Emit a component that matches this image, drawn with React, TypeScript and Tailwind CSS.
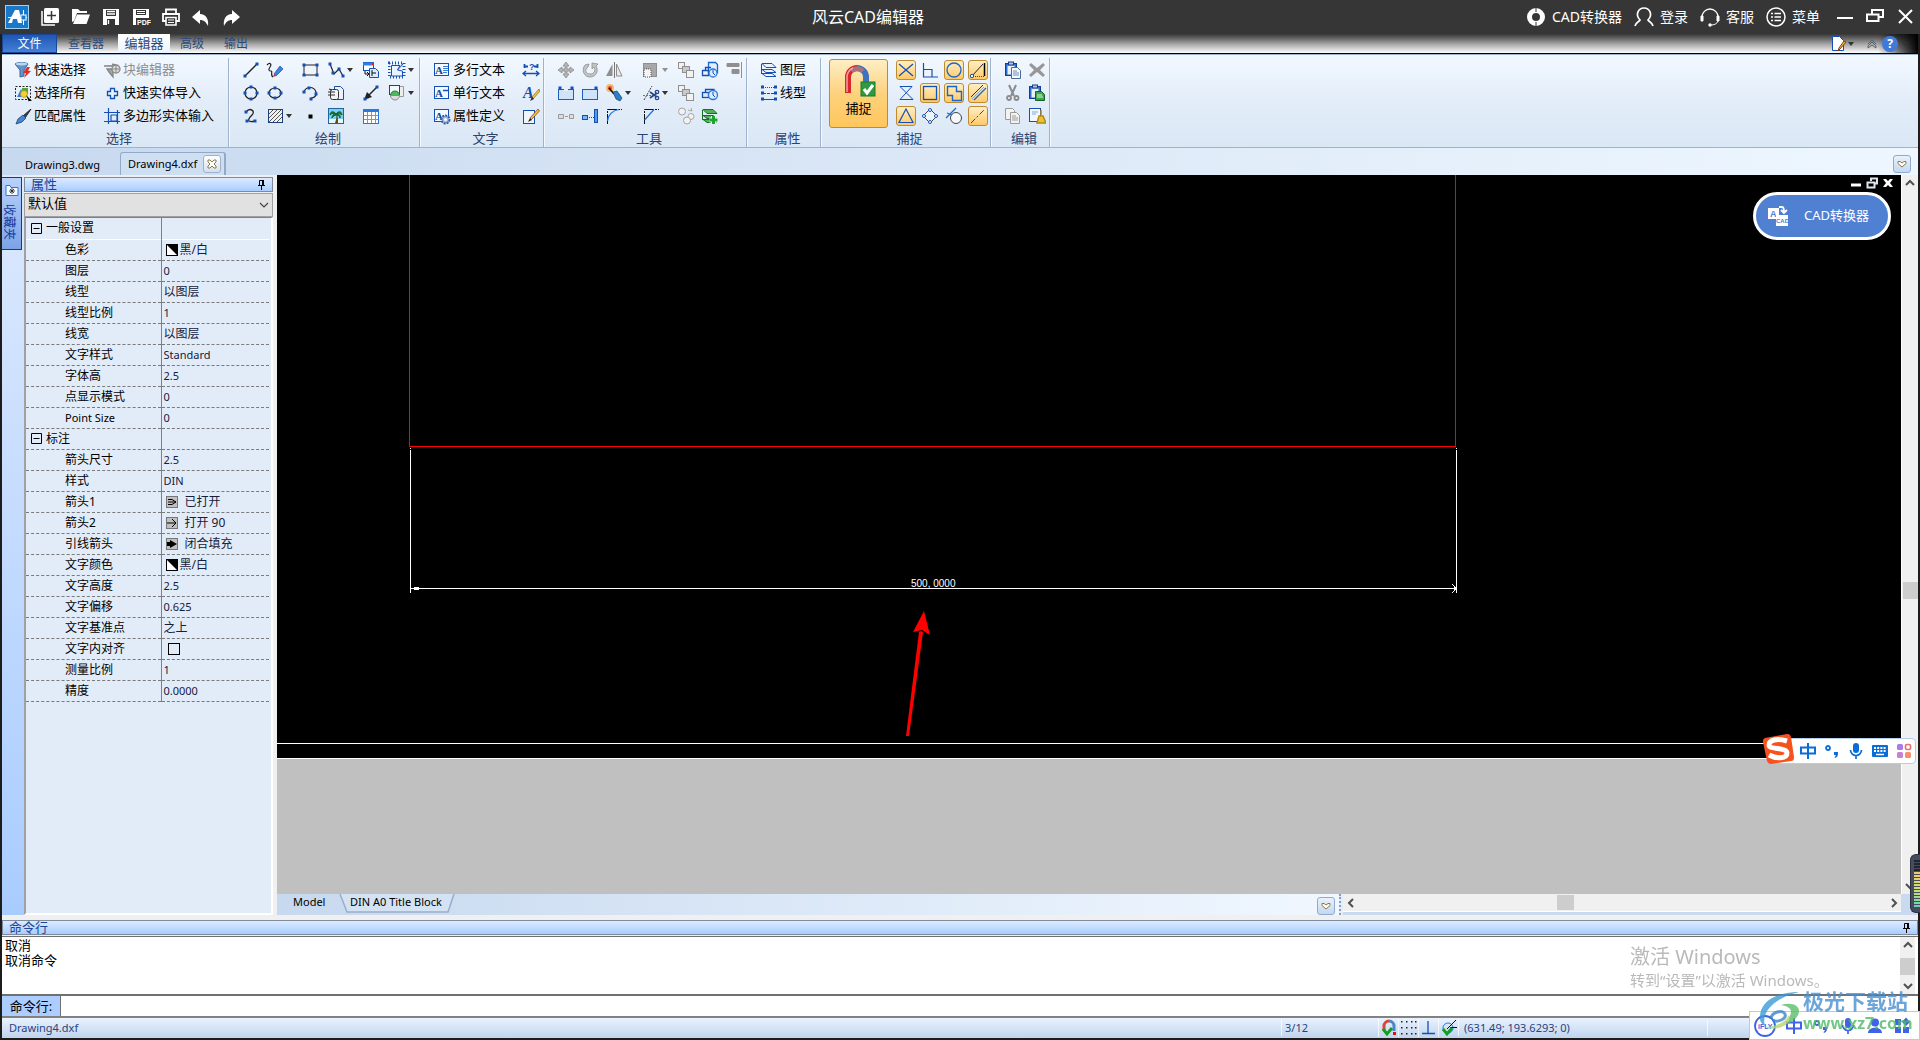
import { Fragment, type ReactNode } from "react";

const dot = (x: number, y: number) => (
  <rect key={`${x}-${y}`} x={x - 1.5} y={y - 1.5} width="3" height="3" fill="#1450b4" />
);
const dots = (pts: number[][]) => pts.map(([x, y]) => dot(x, y));

const letterPage = (extra: ReactNode) => (
  <>
    <rect x="1.5" y="2.5" width="14" height="12" fill="#f4f9ff" stroke="#1450b4" />
    <text x="2" y="13" fontSize="11" fontWeight="700" fontFamily="Liberation Serif, serif" fill="#12479e">A</text>
    {extra}
  </>
);

const layers = (fill: string, stroke: string) => (
  <>
    <path d="M2 12.5h10l4 3H6z" fill={fill} stroke={stroke} />
    <path d="M2 8.500h10l4 3H6z" fill={fill} stroke={stroke} />
    <path d="M2 2.500h10l4 4H6z" fill={fill} stroke={stroke} />
    <path d="M1.500 3v10" stroke={stroke} />
  </>
);

const squares = (
  <g fill="#f2f2f2" stroke="#8f8f8f">
    <rect x="1.5" y="1.500" width="6" height="6" />
    <rect x="5.500" y="5.500" width="7" height="6" fill="#c9c9c9" />
    <rect x="9.500" y="9.500" width="7" height="7" />
  </g>
);

const clipboard = (
  <>
    <rect x="1.500" y="2.500" width="11" height="12" fill="#2f6ed0" stroke="#123f8f" />
    <rect x="3.500" y="4.500" width="7" height="9" fill="#e9f1fb" />
    <rect x="4.500" y="1" width="5" height="3" fill="#b9c4d2" stroke="#123f8f" />
  </>
);

const icons: Record<string, ReactNode> = {
  quick: (
    <>
      <path d="M1 3c2-2 11-2 13 0L10 9v6l-4 1V9z" fill="#5d95c9" stroke="#3a6795" />
      <ellipse cx="7.500" cy="3" rx="6" ry="1.500" fill="#b9d9f2" />
      <path d="M13 6L9 12l3 .3L10 17l7-7-3-.3L16 6z" fill="#e22b2b" />
    </>
  ),
  all: (
    <>
      <rect x="1.500" y="2.500" width="15" height="13" fill="none" stroke="#222" strokeDasharray="2 1.500" />
      <rect x="8" y="4" width="6" height="6" fill="#4fa63d" />
      <path d="M3 13l4-8 4 8z" fill="#3b7fd4" />
      <circle cx="10" cy="10" r="3.500" fill="#f2cf32" stroke="#a98a12" strokeWidth=".6" />
      <path d="M12 11l6 6h-3v1z" fill="#000" />
    </>
  ),
  match: (
    <>
      <path d="M17 2l-8 7 2 2z" fill="#3c4654" stroke="#222" />
      <path d="M9 8L4 12l-2 5 6-2 4-4z" fill="#4a86d0" stroke="#1b3f7a" strokeWidth=".8" />
    </>
  ),
  blockEdit: (
    <>
      <path d="M1 5h8l1-2 3 1M4 8h6v8l-4-5z" fill="#a5a5a5" stroke="#858585" strokeWidth="1.300" />
      <circle cx="13" cy="8" r="4" fill="#ddd" stroke="#858585" strokeWidth="1.300" />
      <path d="M10 8h6M13 5v6" stroke="#858585" />
    </>
  ),
  plus: <path d="M7.500 4.500h4v3h3v4h-3v3h-4v-3h-3v-4h3z" fill="#e8f2ff" stroke="#1450b4" strokeWidth="1.300" />,
  polyIn: <path d="M5.500 1v16M1 5.500h16M14.500 3v14M1 14.500h16M8 8h6v6M8 8v6h6" fill="none" stroke="#1450b4" strokeWidth="1.200" />,

  line: <><path d="M3 15L15 3" stroke="#222" strokeWidth="1.300" />{dots([[3, 15], [15, 3]])}</>,
  sketch: (
    <>
      <path d="M1 4c3-3 5-1 3 2s-1 4 1 4-1 5 2 6" fill="none" stroke="#222" strokeWidth="1.200" />
      <path d="M8 13l6-8 3 3-7 7z" fill="#3b83e0" stroke="#1b4f9c" strokeWidth=".7" />
      <path d="M8 13l2 2-3 1z" fill="#e22b2b" />
    </>
  ),
  rect: <><rect x="3" y="4" width="13" height="10" fill="none" stroke="#222" />{dots([[3, 4], [16, 4], [3, 14], [16, 14]])}</>,
  poly: <><path d="M3 3l4 10 5-5 4 7" fill="none" stroke="#222" strokeWidth="1.200" />{dots([[3, 3], [6, 12], [12, 8], [16, 15]])}</>,
  blocks: (
    <>
      <rect x="1.500" y="1.500" width="10" height="8" fill="#fff" stroke="#1450b4" />
      <path d="M1 3h11" stroke="#2f80e8" strokeWidth="3" />
      <rect x="10" y="2" width="2" height="2" fill="#e22" />
      <path d="M7.500 7.500h6l3 3v6h-9z" fill="#dceafb" stroke="#1450b4" />
      <path d="M10 9v6M10 12h4M3 10v3h4m-2-2l2 2-2 2" fill="none" stroke="#111" />
    </>
  ),
  clip: (
    <>
      <rect x="1" y="2" width="15" height="14" fill="none" stroke="#1450b4" strokeWidth="3" strokeDasharray="1 2" />
      <path d="M3.500 4.500H12L9.500 9l5 1v5h-11z" fill="#e9f3ff" stroke="#1450b4" />
      <path d="M9.500 9L16 2" stroke="#1450b4" />
    </>
  ),
  circle: <><circle cx="9" cy="9" r="6" fill="none" stroke="#222" strokeWidth="1.200" />{dots([[9, 3], [3, 9], [15, 9], [9, 15]])}</>,
  ellipse: <><ellipse cx="9" cy="9" rx="6" ry="5" fill="none" stroke="#222" strokeWidth="1.200" />{dots([[9, 4], [3, 9], [15, 9], [9, 14]])}</>,
  arc: <><path d="M3 8c2-6 10-6 12 0 1 4-2 6-5 6" fill="none" stroke="#222" strokeWidth="1.200" />{dots([[3, 8], [8, 4], [15, 10], [10, 15]])}</>,
  pages: (
    <>
      <path d="M7.500 2.500h6l3 3v10h-9z" fill="#e9f3ff" stroke="#1b4f9c" />
      <rect x="3.500" y="5.500" width="8" height="10" rx="2" fill="#f3f3f3" stroke="#333" />
      <path d="M1 8h7M1 11h7M2 5l3 1" stroke="#333" strokeWidth="1.200" />
    </>
  ),
  arrow: <><path d="M15 3L7 11" stroke="#222" strokeWidth="1.500" /><path d="M2 16l3-8 5 5z" fill="#222" />{dots([[15, 3], [3, 15]])}</>,
  wipe: (
    <>
      <path d="M12 2.500h3.500v10H12" fill="#eee" stroke="#999" />
      <rect x="1.500" y="1.500" width="10" height="9" fill="#f2f8ff" stroke="#1b3f9c" />
      <path d="M2.500 11.500a4.500 4.500 0 019 0z" fill="#4db85f" stroke="#2a7a3a" />
      <path d="M2.500 11.500a4.500 4.500 0 009 0z" fill="#dcdcdc" stroke="#8a8a8a" />
    </>
  ),
  spline: <><path d="M4 5c4-5 10-1 6 3s-6 8 3 6" fill="none" stroke="#222" strokeWidth="1.300" />{dots([[4, 5], [5, 14], [13, 14]])}</>,
  hatch: (
    <>
      <rect x="2.500" y="2.500" width="14" height="13" fill="#f0f0f0" stroke="#1b3f7a" />
      <path d="M3 7l4-4M3 11l8-8M3 15L15 3M7 15l9-9M11 15l5-5" stroke="#555" />
    </>
  ),
  point: <rect x="7.500" y="7.500" width="4" height="4" fill="#000" />,
  palm: (
    <>
      <rect x="1.500" y="1.500" width="15" height="15" fill="#7fd0ee" stroke="#1c66a8" />
      <rect x="2" y="12" width="14" height="4" fill="#e8f7fb" />
      <path d="M9 7c1 3 0 6-1 9h3c0-3 0-6-1-9z" fill="#5d4a1c" />
      <path d="M9 7C6 3 3 5 3 8c2-2 4-2 6-1-3 0-4 2-4 4 1-2 3-3 4-3 2 0 4 1 4 3 1-2-1-4-3-4 2-1 4 0 5 1 0-3-3-5-6-1z" fill="#1d7a3c" stroke="#12602c" />
    </>
  ),
  table: (
    <>
      <rect x="1.500" y="2.500" width="15" height="14" fill="#fff" stroke="#2a78dc" />
      <rect x="1" y="2" width="16" height="3" fill="#2a78dc" />
      <path d="M5.500 5v11M9.500 5v11M13.500 5v11M2 8.500h14M2 12.500h14" stroke="#5b9cec" />
    </>
  ),

  mtext: letterPage(<path d="M10 5.500h5M10 7.500h5M10 9.500h5M10 11.500h4" stroke="#3b7fd4" />),
  stext: letterPage(<path d="M10 6.500h5" stroke="#1450b4" strokeWidth="1.500" />),
  attr: letterPage(<><circle cx="12.500" cy="12.500" r="4" fill="#9db8dc" stroke="#345f9c" strokeDasharray="2 1" strokeWidth="2" /><circle cx="12.500" cy="12.500" r="1.500" fill="#fff" /></>),
  find: (
    <>
      <path d="M2 5.500h4M12 5.500h4M2.500 3v4M15.500 3v4" stroke="#1450b4" strokeWidth="1.800" />
      <text x="7" y="9" fontSize="9" fontWeight="700" fontFamily="Liberation Sans, sans-serif" fill="#1450b4">?</text>
      <path d="M1 12.500h16M4 10l-3 2.500L4 15M14 10l3 2.500-3 2.500" fill="none" stroke="#1450b4" strokeWidth="1.300" />
    </>
  ),
  styleA: (
    <>
      <text x="1" y="14" fontSize="16" fontWeight="700" fontStyle="italic" fontFamily="Liberation Serif, serif" fill="#1450b4">A</text>
      <path d="M17 5l-7 8 1.500 1.500L18 7z" fill="#f3c33a" stroke="#8a6512" strokeWidth=".7" />
      <path d="M10 13l-2 4 4-2z" fill="#222" />
    </>
  ),
  editText: (
    <>
      <rect x="1.500" y="3.500" width="11" height="13" fill="#eef5fe" stroke="#1450b4" />
      <path d="M16 2L8 11l1.500 1.500L17.500 4z" fill="#f3c33a" stroke="#8a3512" strokeWidth=".7" />
      <path d="M8 11l-2 4 4-2z" fill="#222" />
    </>
  ),

  move: <path d="M9 1l3 4h-2v3h3V6l4 3-4 3v-2h-3v3h2l-3 4-3-4h2v-3H5v2L1 9l4-3v2h3V5H6z" fill="#b5b5b5" stroke="#8c8c8c" strokeWidth=".8" />,
  rotate: <path d="M4 4C0 9 3 16 9 16s9-6 6-11l2-2-6-1v6l2-2c2 4 0 7-4 7S3 9 7 6L8 3z" fill="#c4c4c4" stroke="#8f8f8f" strokeWidth=".8" />,
  mirror: <><path d="M7.500 3v12H1z" fill="#8f8f8f" /><path d="M11.500 3v12H17z" fill="#e8e8e8" stroke="#8f8f8f" /><path d="M9.500 1v16" stroke="#777" /></>,
  scale: <><rect x="1.500" y="2.500" width="13" height="13" fill="#a8a8a8" stroke="#8f8f8f" /><rect x="2" y="8" width="7" height="8" fill="#f5f5f5" stroke="#555" strokeDasharray="1 1" /></>,
  squares,
  copyBlue: (
    <>
      <path d="M7.500 1.500h7l2 2v8h-9z" fill="#e3effc" stroke="#1b66cc" strokeWidth="1.300" />
      <path d="M1.500 9.500h6v5h-6zM4.500 9V6.500H10" fill="none" stroke="#1450b4" strokeWidth="1.300" />
      <circle cx="12" cy="12" r="4" fill="#dcebfc" stroke="#2a78dc" strokeWidth="1.300" />
      <path d="M12 12V9M12 12l2 2" stroke="#1450b4" />
    </>
  ),
  align: <path d="M2 2.500h12v3H2zM7 8.500h7v4H7zM16.500 1v16" fill="#8f8f8f" stroke="#8f8f8f" />,
  join: <><rect x="1.500" y="5.500" width="15" height="10" fill="#cfe3fa" stroke="#1b5fc0" /><path d="M7 4h4v3H7z" fill="#e7f0fb" />{dots([[3, 4], [15, 4]])}</>,
  stretch: <><rect x="1.500" y="5.500" width="15" height="10" fill="#cfe3fa" stroke="#1b5fc0" />{dots([[15, 4]])}</>,
  explode: (
    <>
      <circle cx="5" cy="4" r="4" fill="#f9b56a" /><circle cx="5" cy="4" r="2" fill="#ec4b1e" />
      <path d="M4 4l5 6" stroke="#111" strokeWidth="1.600" />
      <path d="M8 8l4-1 5 7-2 3-4-2z" fill="#2f7fc4" stroke="#123f6f" strokeWidth=".7" />
    </>
  ),
  trim: (
    <>
      <path d="M2 16L10 2" stroke="#444" strokeDasharray="2 1" />
      <path d="M1 11.500h10" stroke="#777" strokeDasharray="2 1" />
      <path d="M8 8l7 5M8 14l7-5" stroke="#27468c" strokeWidth="1.600" />
      <circle cx="15" cy="8" r="1.700" fill="none" stroke="#27468c" strokeWidth="1.300" /><circle cx="15" cy="14" r="1.700" fill="none" stroke="#27468c" strokeWidth="1.300" />
    </>
  ),
  group: (
    <>
      <path d="M4.500 9V5.500H13V7" fill="none" stroke="#1450b4" strokeWidth="1.300" />
      <rect x="1.500" y="8.500" width="6" height="5" fill="#dbeafb" stroke="#1450b4" strokeWidth="1.300" />
      <circle cx="12" cy="11" r="4.500" fill="#dceafb" stroke="#2a78dc" strokeWidth="1.300" />
      <path d="M12 11V8M12 11l2 2" stroke="#1450b4" />
    </>
  ),
  lengthen: <path d="M1.500 7.500h5v4h-5zM8 9.500h3M12.500 7.500h4v4h-4z" fill="#ddd" stroke="#999" />,
  extend: <><rect x="1.500" y="8.500" width="5" height="4" fill="#7ab4f5" stroke="#1450b4" /><path d="M8 10.500h5" stroke="#1450b4" strokeDasharray="1 1" /><rect x="13.500" y="2.500" width="3" height="13" fill="#4f9bf0" stroke="#1450b4" /></>,
  fillet: <><path d="M2.500 17V2.500H17" fill="none" stroke="#111" strokeDasharray="10 1 2 1" /><path d="M2.500 14C3 8 8 3 14 2.500" fill="none" stroke="#1b6fe0" strokeWidth="1.200" /></>,
  chamfer: <><path d="M2.500 17V2.500H17" fill="none" stroke="#111" strokeDasharray="10 1 2 1" /><path d="M2.500 13L12 2.500" fill="none" stroke="#1b6fe0" strokeWidth="1.200" /></>,
  ungroup: <g fill="#f2f2f2" stroke="#a5a5a5"><circle cx="5" cy="4.500" r="3.500" /><circle cx="14" cy="9.500" r="3" /><circle cx="10" cy="13.500" r="3.500" /><path d="M11 3l4 1-1-3" /></g>,
  greenStack: <>{layers("#4fb257", "#17702a")}<path d="M12.500 9v8M8.500 13h8" stroke="#fff" strokeWidth="5" /><path d="M12.500 9v8M8.500 13h8" stroke="#1fa32f" strokeWidth="3" /></>,

  layer: layers("#eaf3ff", "#1450b4"),
  linetype: (
    <>
      <path d="M3 3.500h12" stroke="#1450b4" strokeDasharray="1 1" /><path d="M3 9.500h12" stroke="#1450b4" strokeDasharray="3 1" /><path d="M3 15.500h12" stroke="#1450b4" />
      <g fill="#fff" stroke="#1450b4">{[3, 9, 15].map((y) => <Fragment key={y}><rect x="1.500" y={y - 1} width="2" height="2" /><rect x="14.500" y={y - 1} width="2" height="2" /></Fragment>)}</g>
    </>
  ),

  snapX: <path d="M2 3l14 12M16 3L2 15" stroke="#1550b8" strokeWidth="1.300" />,
  snapPerp: <path d="M2.500 2v14H17M2.500 8.500H11V16" fill="none" stroke="#1550b8" strokeWidth="1.200" />,
  snapCircle: <circle cx="9" cy="9" r="7" fill="none" stroke="#1b66cc" strokeWidth="1.300" />,
  snapTri: <><path d="M3 15L14 3" stroke="#222" /><path d="M15.500 2v13" stroke="#000" strokeWidth="1.500" /><path d="M4 15.500h12" stroke="#1450b4" strokeDasharray="1 1" /><circle cx="3" cy="15" r="1.700" fill="#fff" stroke="#1450b4" /></>,
  snapHour: <path d="M3 2.500h12L3 15.500h13L3 2.500" fill="none" stroke="#1550b8" />,
  snapSq: <rect x="2.500" y="2.500" width="13" height="13" fill="none" stroke="#1550b8" strokeWidth="1.300" />,
  snapIns: <path d="M2.500 2.500h9v5h5v9h-9v-5h-5z" fill="none" stroke="#1b66cc" strokeWidth="1.400" />,
  snapPar: <><path d="M2 13L14 1" stroke="#333" /><path d="M5 16L17 4" stroke="#1b66cc" strokeWidth="1.200" /><path d="M3 15L15 3" stroke="#8fa8c8" /></>,
  snapMid: <path d="M9 2l7 13.500H2z" fill="none" stroke="#1550b8" strokeWidth="1.200" />,
  snapQuad: <><path d="M9 2l7 7-7 7-7-7z" fill="#eef4fb" stroke="#444" /><g fill="#fff" stroke="#1450b4"><circle cx="9" cy="3" r="1.500" /><circle cx="3" cy="9" r="1.500" /><circle cx="15" cy="9" r="1.500" /><circle cx="9" cy="15" r="1.500" /></g></>,
  snapTan: <><circle cx="11" cy="11" r="5.500" fill="#f4f8fd" stroke="#444" /><path d="M1 11L11 1M2 6l5 2" stroke="#1b66cc" strokeWidth="1.300" /></>,
  snapNear: <path d="M2 16L16 2" stroke="#444" strokeDasharray="6 2 2 2" />,

  paste: <>{clipboard}<path d="M7.500 6.500h6l3 3v8h-9z" fill="#f5f9fe" stroke="#4b6b94" /><path d="M9 10h4M9 12h6M9 14h6" stroke="#6b8cb5" /></>,
  del: <path d="M3 2l6 5 6-5 2 2-5 5 5 5-2 2-6-5-6 5-2-2 5-5-5-5z" fill="#979797" />,
  cut: <><path d="M5 1l5 11M12 1L7 12" stroke="#8c8c8c" strokeWidth="2" /><g fill="none" stroke="#8c8c8c" strokeWidth="1.800"><circle cx="5" cy="14" r="2" /><circle cx="12.500" cy="14" r="2" /></g></>,
  pasteBlock: <>{clipboard}<path d="M7.500 7.500h6l3 3v6h-9z" fill="#3fa64b" stroke="#12602c" /><path d="M9 11h5M9 13h6" stroke="#dff5e0" /></>,
  copy: <g fill="#f2f2f2" stroke="#9a9a9a"><path d="M1.500 1.500h7l2 2v9h-9z" /><path d="M6.500 5.500h6l3 3v8h-9z" /><path d="M8 9h4M8 11h6M8 13h6" /></g>,
  brush: <><rect x="1.500" y="1.500" width="11" height="13" fill="#f2f8ff" stroke="#1450b4" /><path d="M4 5h6M4 7h4" stroke="#7fa8dc" /><path d="M13 3v5M9 16l2-7h4l3 7z" fill="#f0c22c" stroke="#b08a1a" strokeWidth="1.500" /></>,
};

function Icon({ name }: { name: string }) {
  return (
    <svg viewBox="0 0 18 18" className="h-[18px] w-[18px] shrink-0" aria-hidden="true">
      {icons[name]}
    </svg>
  );
}

function Caret({ muted = false }: { muted?: boolean }) {
  return (
    <svg viewBox="0 0 6 4" className="h-1 w-1.5 shrink-0" aria-hidden="true">
      <path d="M0 0h6L3 4z" fill={muted ? "#8f8f8f" : "#333"} />
    </svg>
  );
}

function Tool({ name, caret, muted }: { name: string; caret?: boolean; muted?: boolean }) {
  return (
    <button type="button" aria-label={name} className="flex items-center gap-0.5">
      <Icon name={name} />
      {caret && <Caret muted={muted} />}
    </button>
  );
}

function TextTool({ name, label, muted }: { name: string; label: string; muted?: boolean }) {
  return (
    <button type="button" className={`flex items-center gap-0.5 whitespace-nowrap text-[13px] ${muted ? "text-[#8d8d8d]" : "text-black"}`}>
      <Icon name={name} />
      {label}
    </button>
  );
}

function Group({ label, width, children }: { label: string; width: string; children: ReactNode }) {
  return (
    <section className={`flex shrink-0 flex-col border-r border-[#9fb3cf] shadow-[1px_0_0_#f4f9ff] ${width}`}>
      <div className="h-[69px]">{children}</div>
      <div className="flex h-[21px] items-center justify-center pt-0.5 pl-2 text-[13px] leading-4 text-[#2a4370]">{label}</div>
    </section>
  );
}

const drawTools: ([string, boolean?] | null)[] = [
  ["line"], ["sketch"], ["rect"], ["poly", true], ["blocks"], ["clip", true],
  ["circle"], ["ellipse"], ["arc"], ["pages"], ["arrow"], ["wipe", true],
  ["spline"], ["hatch", true], ["point"], ["palm"], ["table"], null,
];

const editTools: ([string, boolean?, boolean?] | null)[] = [
  ["move"], ["rotate"], ["mirror"], ["scale", true, true], ["squares"], ["copyBlue"], ["align"],
  ["join"], ["stretch"], ["explode", true], ["trim", true], ["squares"], ["group"], null,
  ["lengthen"], ["extend"], ["fillet"], ["chamfer"], ["ungroup"], ["greenStack"], null,
];

const snaps: [string, boolean][] = [
  ["snapX", true], ["snapPerp", false], ["snapCircle", true], ["snapTri", true],
  ["snapHour", false], ["snapSq", true], ["snapIns", true], ["snapPar", true],
  ["snapMid", true], ["snapQuad", false], ["snapTan", false], ["snapNear", true],
];

function Ribbon() {
  return (
    <div className="flex h-[94px] border-y border-[#9fb3cf] bg-linear-to-b from-[#f2f8ff] via-[#e3edf9] to-[#dae7f5] pt-[3px]">
      <Group label="选择" width="w-[227px]">
        <div className="grid grid-cols-[89px_auto] grid-rows-[23px_23px_23px] pl-3">
          <TextTool name="quick" label="快速选择" />
          <TextTool name="blockEdit" label="块编辑器" muted />
          <TextTool name="all" label="选择所有" />
          <TextTool name="plus" label="快速实体导入" />
          <TextTool name="match" label="匹配属性" />
          <TextTool name="polyIn" label="多边形实体输入" />
        </div>
      </Group>
      <Group label="绘制" width="w-[191px]">
        <div className="grid grid-cols-[24px_35px_26px_35px_26px_auto] grid-rows-[23px_23px_23px] pl-[13px]">
          {drawTools.map((t, i) => (t ? <Tool key={i} name={t[0]} caret={t[1]} /> : <span key={i} />))}
        </div>
      </Group>
      <Group label="文字" width="w-[124px]">
        <div className="grid grid-cols-[89px_auto] grid-rows-[23px_23px_23px] pl-[13px]">
          <TextTool name="mtext" label="多行文本" />
          <Tool name="find" />
          <TextTool name="stext" label="单行文本" />
          <Tool name="styleA" />
          <TextTool name="attr" label="属性定义" />
          <Tool name="editText" />
        </div>
      </Group>
      <Group label="工具" width="w-[203px]">
        <div className="grid grid-cols-[24px_24px_37px_35px_24px_24px_auto] grid-rows-[23px_23px_23px] pl-[13px]">
          {editTools.map((t, i) => (t ? <Tool key={i} name={t[0]} caret={t[1]} muted={t[2]} /> : <span key={i} />))}
        </div>
      </Group>
      <Group label="属性" width="w-[74px]">
        <div className="grid grid-rows-[23px_23px_23px] pl-[13px]">
          <TextTool name="layer" label="图层" />
          <TextTool name="linetype" label="线型" />
        </div>
      </Group>
      <Group label="捕捉" width="w-[170px]">
        <div className="flex gap-2 pt-px pl-2">
          <button type="button" className="flex h-[69px] w-[59px] flex-col items-center rounded-[3px] border border-[#c08a2e] bg-linear-to-b from-[#fdeec4] via-[#fdd27c] to-[#ffc65c] pt-0.5 text-[13px] leading-4">
            <svg viewBox="0 0 34 36" className="h-[36px] w-[34px]" aria-hidden="true">
              <path d="M6 31V15a9 9 0 019-9" fill="none" stroke="#d8262c" strokeWidth="6" />
              <path d="M15 6a9 9 0 019 9v5" fill="none" stroke="#3f73bd" strokeWidth="6" />
              <path d="M9 9a9 9 0 0112 0" fill="none" stroke="#a8727c" strokeWidth="5" />
              <path d="M5 30V15c0-4 2-7 6-9" fill="none" stroke="#f0a3a3" strokeWidth="1.500" />
              <rect x="19" y="20" width="14" height="14" fill="#2f9a3f" stroke="#1c7a2c" />
              <path d="M22 27l3 4 6-8" fill="none" stroke="#fff" strokeWidth="3" />
            </svg>
            <span className="mt-0.5">捕捉</span>
          </button>
          <div className="grid grid-cols-[repeat(4,20px)] content-start gap-x-1 gap-y-[3px] pt-px">
            {snaps.map(([n, on]) => (
              <button
                key={n}
                type="button"
                aria-label={n}
                aria-pressed={on}
                className={`flex h-5 w-5 items-center justify-center rounded-[3px] ${on ? "border border-[#c08a2e] bg-linear-to-b from-[#fdeec4] to-[#ffca66]" : ""}`}
              >
                <Icon name={n} />
              </button>
            ))}
          </div>
        </div>
      </Group>
      <Group label="编辑" width="w-[59px]">
        <div className="grid grid-cols-[24px_auto] grid-rows-[23px_23px_23px] pl-[13px]">
          {["paste", "del", "cut", "pasteBlock", "copy", "brush"].map((n) => <Tool key={n} name={n} />)}
        </div>
      </Group>
    </div>
  );
}

const quickIcons: [string, ReactNode][] = [
  ["新建", <><path d="M1 4v14h13" fill="none" stroke="#fff" strokeWidth="1.500" /><rect x="3" y="1" width="15" height="15" rx="1.500" fill="#fff" /><path d="M10.500 4v9M6 8.500h9" stroke="#363636" strokeWidth="1.500" /></>],
  ["打开", <path d="M1 2h6l2 2h7v2H6L3 14l-2 1zM6 7.500h13L15.500 17H2z" fill="#fff" />],
  ["保存", <><path d="M2 2h16v16H2z" fill="#fff" /><path d="M5 3h10v6H5zM6 12h8v6H6z" fill="#363636" /><path d="M6 4.500h8M6 7h8M7.500 13v4" stroke="#fff" strokeWidth="1.300" /></>],
  ["导出", <><path d="M2 2h16v9H2zM2 11h3v7H2z" fill="#fff" /><path d="M5 3h10v5H5z" fill="#363636" /><path d="M6 4.500h8M6 6.500h8" stroke="#fff" /><text x="6" y="18" fontSize="7" fontWeight="700" fontFamily="Liberation Sans, sans-serif" fill="#fff">PDF</text></>],
  ["打印", <><path d="M5 2.500h10V7H5zM2 7h16v7H2z" fill="none" stroke="#fff" strokeWidth="1.800" /><path d="M5 10.500h10V18H5z" fill="#363636" stroke="#fff" strokeWidth="1.600" /><path d="M7 13h6M7 15.500h6" stroke="#fff" /></>],
  ["撤销", <path d="M9 3v4c6 0 9 5 8 12-2-4-4-6-8-6v4L1 10z" fill="#fff" />],
  ["重做", <path d="M11 3v4C5 7 2 12 3 19c2-4 4-6 8-6v4l8-7z" fill="#fff" />],
];

function TitleBar() {
  const links: [string, ReactNode][] = [
    ["CAD转换器", <><circle cx="10" cy="10" r="6.500" fill="none" stroke="#fff" strokeWidth="5" /><path d="M10 1v4M10 15v4" stroke="#363636" /></>],
    ["登录", <path d="M1 19c1-4 4-4 5-6-5-5-2-12 4-12s9 7 4 12c1 2 4 2 5 6" fill="none" stroke="#fff" strokeWidth="1.700" />],
    ["客服", <><path d="M2 10a8 8 0 0116 0" fill="none" stroke="#fff" strokeWidth="1.300" /><path d="M1 9h2v5H1zM17 9h2v5h-2z" fill="#fff" stroke="#fff" /><path d="M18 14c-1 3-4 4-7 4" fill="none" stroke="#fff" /><circle cx="10" cy="18" r="1.700" fill="#fff" /></>],
    ["菜单", <><circle cx="10" cy="10" r="9" fill="none" stroke="#fff" strokeWidth="1.500" /><path d="M5 6.500h2M5 10h2M5 13.500h2M8.500 6.500H15M8.500 10H15M8.500 13.500H15" stroke="#fff" strokeWidth="1.700" /></>],
  ];
  return (
    <header className="flex h-[34px] items-center bg-[#363636] pl-[5px] text-white">
      <svg viewBox="0 0 24 24" className="mr-[7px] h-6 w-6" aria-hidden="true">
        <rect x=".5" y=".5" width="23" height="23" fill="#1978c8" stroke="#9fd0f5" />
        <path d="M3 18L10 5h4l3 13h-4l-1-4H8l-1 4z" fill="#fff" />
        <path d="M3 12.500h19M18.500 5v15" stroke="#fff" />
        <rect x="16" y="10" width="5" height="5" fill="#1978c8" stroke="#fff" />
      </svg>
      {quickIcons.map(([name, art]) => (
        <button key={name} type="button" aria-label={name} className="flex w-[30px] justify-center">
          <svg viewBox="0 0 20 20" className="h-5 w-5" aria-hidden="true">{art}</svg>
        </button>
      ))}
      <h1 className="flex-1 text-center text-base leading-6">风云CAD编辑器</h1>
      <div className="flex w-[430px] items-center justify-end gap-3 pr-1.5 text-sm">
        {links.map(([name, art]) => (
          <button key={name} type="button" className="flex items-center gap-1.5 whitespace-nowrap">
            <svg viewBox="0 0 20 20" className="h-5 w-5" aria-hidden="true">{art}</svg>
            {name}
          </button>
        ))}
        <div className="ml-1 flex items-center gap-3">
          <button type="button" aria-label="最小化"><svg viewBox="0 0 18 18" className="h-[18px] w-[18px]"><path d="M1 10h16" stroke="#fff" strokeWidth="2" /></svg></button>
          <button type="button" aria-label="还原"><svg viewBox="0 0 18 18" className="h-[18px] w-[18px]"><path d="M6 6V2h11v7h-4M1 6.500h11.500V13H1z" fill="none" stroke="#fff" strokeWidth="2" /></svg></button>
          <button type="button" aria-label="关闭"><svg viewBox="0 0 18 18" className="h-[18px] w-[18px]"><path d="M3 2l13 13M16 2L3 15" stroke="#fff" strokeWidth="2" /></svg></button>
        </div>
      </div>
    </header>
  );
}

function RibbonTabs() {
  return (
    <nav className="flex h-5 items-stretch border-b border-black bg-linear-to-b from-[#383838] via-[#a0a0a0] to-white text-xs text-[#2a4a7a]">
      <button type="button" className="w-[55px] border border-[#1b4696] bg-linear-to-b from-[#1f57b4] to-[#4480d6] text-white">文件</button>
      <button type="button" className="ml-[11px] w-9">查看器</button>
      <button type="button" className="ml-3.5 w-[52px] bg-linear-to-b from-white to-[#eaf3fd] text-[13px]">编辑器</button>
      <button type="button" className="ml-2.5 w-6">高级</button>
      <button type="button" className="ml-5 w-6">输出</button>
      <div className="flex flex-1 items-center justify-end gap-3">
        <button type="button" aria-label="样式" className="flex items-center">
          <svg viewBox="0 0 18 18" className="h-[18px] w-[18px]"><path d="M2.500 1.500h7l4 4v10h-11z" fill="#fff" stroke="#1450b4" /><path d="M16 7l-6 7-2 2 1-3 5-7z" fill="#f3c33a" stroke="#8a3512" /></svg>
          <Caret />
        </button>
        <button type="button" aria-label="折叠">
          <svg viewBox="0 0 12 12" className="h-3 w-3"><path d="M2 6l4-4 4 4M2 10V8l4-4 4 4v2L6 7z" fill="none" stroke="#5a6470" /></svg>
        </button>
      </div>
      <div className="flex w-[40px] items-center gap-1 bg-linear-to-r from-transparent to-black pl-1">
        <button type="button" className="h-4 w-4 rounded-full bg-[#3f7ad8] text-center text-xs leading-4 font-bold text-white">?</button>
        <Caret />
      </div>
    </nav>
  );
}

function HeartButton() {
  return (
    <button type="button" aria-label="更多" className="flex h-[18px] w-[18px] items-center justify-center rounded-[3px] border border-[#8fabd0] bg-linear-to-b from-[#e9f2fc] to-[#c3d8f1]">
      <svg viewBox="0 0 10 8" className="h-2 w-2.5"><path d="M1 1.500h2L5 3l2-1.500h2v2L5 7 1 3.500z" fill="#fff" stroke="#8c7a44" /></svg>
    </button>
  );
}

function DocTabs() {
  return (
    <div className="flex h-[27px] items-end bg-linear-to-r from-[#c7d9ef] via-[#dce8f7] to-[#eef7ff] text-[11px] text-black">
      <button type="button" className="h-5 w-[118px] pl-[23px] text-left leading-5">Drawing3.dwg</button>
      <div className="flex h-[23px] w-[106px] items-center rounded-t-[3px] border-t border-r-2 border-l border-[#93a9c8] bg-[#cfdff2] pl-[7px]">
        <button type="button" className="flex-1 text-left leading-5">Drawing4.dxf</button>
        <button type="button" aria-label="关闭标签" className="mr-[3px] flex h-[18px] w-[18px] items-center justify-center rounded-[3px] border border-[#9fb0c8] bg-linear-to-b from-white to-[#d3e0f0]">
          <svg viewBox="0 0 10 10" className="h-2.5 w-2.5"><path d="M1 1h2l2 2 2-2h2v2L7 5l2 2v2H7L5 7 3 9H1V7l2-2-2-2z" fill="#fff" stroke="#8c7a44" /></svg>
        </button>
      </div>
      <div className="flex flex-1 justify-end pr-[7px] pb-0.5"><HeartButton /></div>
    </div>
  );
}

function Pin() {
  return (
    <button type="button" aria-label="固定">
      <svg viewBox="0 0 9 11" className="h-[11px] w-[9px]"><path d="M2.500 6V1.500h4V6M1 6.500h7M4.500 7v4" fill="none" stroke="#000" /><path d="M6 1v5" stroke="#000" strokeWidth="2" /></svg>
    </button>
  );
}

function PanelHeader({ title }: { title: string }) {
  return (
    <div className="flex h-[15px] items-center justify-between border border-[#7f8a9a] bg-linear-to-b from-[#dcebff] to-[#a9cdff] px-1.5 text-[13px] leading-[13px] text-[#1c4596]">
      <h2>{title}</h2>
      <Pin />
    </div>
  );
}

const swatch = <svg viewBox="0 0 12 12" className="mr-0.5 h-3 w-3"><rect x=".5" y=".5" width="11" height="11" fill="#fff" stroke="#000" /><path d="M1 1h10v10z" fill="#000" /></svg>;
const arrowMark = (art: ReactNode) => (
  <svg viewBox="0 0 12 12" className="mr-[7px] h-3 w-3"><rect x=".5" y=".5" width="11" height="11" fill="#c0c0c0" stroke="#777" />{art}</svg>
);
const marked = (mark: ReactNode, label: string) => <div className="flex items-center pl-0.5">{mark}{label}</div>;

const properties: { name: string; value?: ReactNode; head?: boolean }[] = [
  { name: "一般设置", head: true },
  { name: "色彩", value: marked(swatch, "黑/白") },
  { name: "图层", value: "0" },
  { name: "线型", value: "以图层" },
  { name: "线型比例", value: "1" },
  { name: "线宽", value: "以图层" },
  { name: "文字样式", value: "Standard" },
  { name: "字体高", value: "2.5" },
  { name: "点显示模式", value: "0" },
  { name: "Point Size", value: "0" },
  { name: "标注", head: true },
  { name: "箭头尺寸", value: "2.5" },
  { name: "样式", value: "DIN" },
  { name: "箭头1", value: marked(arrowMark(<path d="M2 3.500h4l4 2.500-4 2.500H2M2 6h8" fill="none" stroke="#000" />), "已打开") },
  { name: "箭头2", value: marked(arrowMark(<path d="M1 6h9M6 2l4 4-4 4" fill="none" stroke="#000" />), "打开 90") },
  { name: "引线箭头", value: marked(arrowMark(<path d="M1 4h3V2l7 4-7 4V8H1z" fill="#000" />), "闭合填充") },
  { name: "文字颜色", value: marked(swatch, "黑/白") },
  { name: "文字高度", value: "2.5" },
  { name: "文字偏移", value: "0.625" },
  { name: "文字基准点", value: "之上" },
  { name: "文字内对齐", value: <input type="checkbox" aria-label="文字内对齐" className="ml-1 block h-3 w-3 appearance-none border border-black" /> },
  { name: "测量比例", value: "1" },
  { name: "精度", value: "0.0000" },
];

// Latin values are set one size smaller than the Chinese ones
const isLatin = (v: ReactNode) => typeof v === "string" && /^[\w. ]+$/.test(v);

function PropertyPanel() {
  return (
    <aside className="flex w-[253px] shrink-0 flex-col bg-[#f0f0f0] pt-0.5 pr-1">
      <PanelHeader title="属性" />
      <div className="relative mt-px">
        <select aria-label="默认值" className="block h-[24px] w-full appearance-none border border-[#a0a0a0] bg-[#e1e1e1] pb-1 pl-[3px] text-[13px] leading-4">
          <option>默认值</option>
        </select>
        <svg viewBox="0 0 10 6" className="pointer-events-none absolute top-[9px] right-1 h-1.5 w-2.5"><path d="M1 1l4 4 4-4" fill="none" stroke="#444" strokeWidth="1.200" /></svg>
      </div>
      <div className="flex-1 border-t border-r-2 border-b-2 border-l-2 border-t-[#808080] border-r-white border-b-white border-l-[#a0a0a0] bg-[#e2ecf9]">
        <table className="w-[243px] table-fixed border-collapse text-xs leading-4 text-black">
          <tbody>
            {properties.map((p, i) => (
              <tr key={i} className="h-[21px] border-b border-dashed border-[#7a7a7a] first:border-solid first:border-white">
                <th scope="row" className={`w-[135px] border-r border-solid border-r-[#808080] p-0 text-left font-normal ${p.head ? "pl-[5px]" : "pl-[39px]"} ${isLatin(p.name) ? "text-[11px]" : ""}`}>
                  {p.head && (
                    <svg viewBox="0 0 11 11" className="mr-1 mb-0.5 inline h-[11px] w-[11px]"><path d="M.5.5h10v10H.5zM2.500 5.500h6" fill="none" stroke="#000" /></svg>
                  )}
                  {p.name}
                </th>
                <td className={`p-0 pl-0.5 text-[#15203a] ${isLatin(p.value) ? "text-[11px]" : ""}`}>{p.value}</td>
              </tr>
            ))}
          </tbody>
        </table>
      </div>
    </aside>
  );
}

function Favourites() {
  return (
    <div className="w-[22px] shrink-0 bg-linear-to-b from-[#dce9fd] to-[#a9ccff] pt-0.5">
      <button type="button" className="flex h-[73px] w-5 flex-col items-center gap-2 border border-l-0 border-[#12389a] bg-linear-to-b from-[#b9d2fb] to-[#7da3e6] pt-1.5">
        <svg viewBox="0 0 14 12" className="h-3 w-3.5"><path d="M1 1.500h4l1 2h7v8H1z" fill="#f5f9ff" stroke="#2a78dc" /><path d="M7 4v6M4 7h6M5 5l4 4M9 5L5 9" stroke="#222" strokeWidth=".8" /></svg>
        <span className="mr-1.5 text-xs leading-3 text-[#12389a] [text-orientation:sideways] [writing-mode:vertical-rl]">收藏夹</span>
      </button>
    </div>
  );
}

function Chevron({ dir }: { dir: "up" | "down" | "left" | "right" }) {
  const d = { up: "M1 6l4-4 4 4", down: "M1 3l4 4 4-4", left: "M7 1L3 5l4 4", right: "M3 1l4 4-4 4" }[dir];
  return (
    <button type="button" aria-label={dir} className="flex h-[17px] w-[15px] items-center justify-center">
      <svg viewBox="0 0 10 10" className="h-2.5 w-2.5"><path d={d} fill="none" stroke="#505050" strokeWidth="2" /></svg>
    </button>
  );
}

function Drawing() {
  return (
    <div className="relative flex flex-1 flex-col overflow-hidden bg-black">
      <svg className="w-full flex-1 bg-black" aria-hidden="true">
        <g shapeRendering="crispEdges" fill="none" strokeWidth="1">
          <path d="M132.500 0v271.500H1178.500V0" stroke="#f00" />
          <path d="M133.500 273v1M133.500 275v143M1179.500 273v1M1179.500 275v143M133 413.500h1046" stroke="#fff" />
          <path d="M137 413.500h5" stroke="#fff" strokeWidth="3" />
          <path d="M1175 409l4 4.500-4 4.500" stroke="#fff" />
          <path d="M0 568.500h1624" stroke="#fff" />
        </g>
        <text x="634" y="412" fontSize="10" fontFamily="Liberation Sans, sans-serif" fill="#fff">500, 0000</text>
        <path d="M629 561L642 457l2-1 2 1-14 104z" fill="#f00" />
        <path d="M647 436l6 24-8-5-9 2z" fill="#f00" />
      </svg>
      <div className="h-[136px] border-t border-white bg-[#c0c0c0]" />
      <div className="absolute top-0.5 right-[7px] flex gap-1">
        {["M1 6.500h10v3H1z", "M5 4V1.500h6v5H8M1.500 5.500h7v5h-7z", "M1 2h3l2 2 2-2h3L8 6l3 4H8L6 8l-2 2H1l3-4z"].map((d) => (
          <button key={d} type="button" aria-label="窗口"><svg viewBox="0 0 12 12" className="h-3 w-3"><path d={d} fill={d.startsWith("M5") ? "none" : "#fff"} stroke={d.startsWith("M5") ? "#dfe6ef" : "none"} strokeWidth="2" /></svg></button>
        ))}
      </div>
      <button type="button" className="absolute top-[17px] right-2.5 flex h-12 w-[138px] items-center gap-4 rounded-full border-3 border-white bg-[#4f80d2] pl-3 text-[13px] whitespace-nowrap text-white">
        <svg viewBox="0 0 20 20" className="h-5 w-5" aria-hidden="true">
          <rect x="0" y="2" width="11" height="11" fill="#fff" />
          <text x="2" y="11" fontSize="9" fontWeight="700" fontFamily="Liberation Sans, sans-serif" fill="#4f80d2">A</text>
          <rect x="8" y="9" width="12" height="11" fill="#fff" />
          <text x="8" y="17" fontSize="6" fontWeight="700" fontFamily="Liberation Sans, sans-serif" fill="#4f80d2">CAD</text>
          <path d="M11 1h3c2 0 2 2 2 5m-3-2l3 3 3-3" fill="none" stroke="#fff" strokeWidth="1.800" />
        </svg>
        CAD转换器
      </button>
    </div>
  );
}

function SheetTabs() {
  return (
    <div className="flex h-[21px] text-[11px] leading-4 text-black">
      <div className="flex flex-1 bg-linear-to-r from-[#c7d9ef] to-[#f0f7ff]">
        <button type="button" className="h-4 w-[62px] pl-4 text-left">Model</button>
        <div className="relative w-[116px]">
          <svg viewBox="0 0 116 21" className="absolute inset-0 h-[21px] w-[116px]" aria-hidden="true"><path d="M1 0l7 18h101l6-18" fill="#d4e3f4" stroke="#9aaec9" strokeWidth="1.500" /></svg>
          <button type="button" className="relative w-full pl-[11px] text-left whitespace-nowrap">DIN A0 Title Block</button>
        </div>
        <div className="flex flex-1 justify-end pt-[3px] pr-1"><HeartButton /></div>
      </div>
      <div className="w-1 border-l-2 border-dotted border-[#8f9db0] bg-[#e4eefa]" />
      <div className="flex w-[558px] flex-col bg-[#c9daf0]">
        <div className="flex h-[18px] items-center justify-between border-b border-white bg-[#f0f0f0]">
          <Chevron dir="left" />
          <div className="ml-[199px] h-[15px] w-[17px] bg-[#cdcdcd]" />
          <span className="flex-1" />
          <Chevron dir="right" />
        </div>
      </div>
    </div>
  );
}

function CommandArea() {
  return (
    <section className="bg-[#f0f0f0] pt-[5px]">
      <PanelHeader title="命令行" />
      <div className="mt-px flex h-[60px] border-t border-b-2 border-[#707070] bg-white">
        <p className="flex-1 px-[3px] pt-px text-[13px] leading-[15px] whitespace-pre-line text-black">{"取消\n取消命令"}</p>
        <div className="flex w-[15px] flex-col items-center bg-[#f0f0f0]">
          <Chevron dir="up" />
          <div className="mt-1 h-[17px] w-[15px] bg-[#cdcdcd]" />
          <span className="flex-1" />
          <Chevron dir="down" />
        </div>
        <div className="w-[3px] bg-white" />
      </div>
      <div className="flex h-[21px] border-b border-[#808080] bg-white">
        <label htmlFor="cmd" className="w-[58px] bg-[#abcdff] text-center text-[13px] leading-5 text-black">命令行:</label>
        <input id="cmd" className="flex-1 border-l border-[#707070] px-1 text-xs outline-none" />
      </div>
    </section>
  );
}

const statusIcons: ReactNode[] = [
  <><path d="M4 12V7a5 5 0 015-5" fill="none" stroke="#d8463c" strokeWidth="3" /><path d="M9 2a5 5 0 015 5v5" fill="none" stroke="#4a86d0" strokeWidth="3" /><path d="M3 10l4 5 5-6" fill="none" stroke="#12a01c" strokeWidth="3" /><rect x="13" y="13" width="3" height="3" fill="#d11" /></>,
  <g fill="#222">{[1, 6, 11, 15].flatMap((x) => [2, 8, 14].map((y) => <rect key={`${x}-${y}`} x={x} y={y} width="1.500" height="1.500" />))}</g>,
  <path d="M8 2v12M2 14.500h13" stroke="#1450b4" strokeWidth="1.300" />,
  <><circle cx="8" cy="9" r="5" fill="none" stroke="#2a78dc" /><path d="M7 10L16 1M10 8.500h7" stroke="#111" /><path d="M3 10l4 5 5-6" fill="none" stroke="#12a01c" strokeWidth="3" /></>,
];

function StatusBar() {
  return (
    <footer className="flex h-[21px] items-center border-t border-[#6f87a8] bg-linear-to-b from-[#eaf3fe] to-[#c0d4ee] text-[11px] leading-4 text-[#28427f]">
      <span className="flex-1 pl-[7px]">Drawing4.dxf</span>
      <span className="w-[97px] border-l border-white/70 pl-[3px]">3/12</span>
      {statusIcons.map((art, i) => (
        <button key={i} type="button" aria-label={`状态 ${i + 1}`} className="flex h-[18px] w-5 items-center justify-center border-l border-white/70">
          <svg viewBox="0 0 18 18" className="h-[18px] w-[18px]">{art}</svg>
        </button>
      ))}
      <span className="w-[250px] border-x border-white/70 pl-[5px]">(631.49; 193.6293; 0)</span>
      <span className="w-[210px]" />
    </footer>
  );
}

const punct = <><circle cx="5" cy="6" r="2" fill="none" stroke="currentColor" strokeWidth="1.800" /><path d="M11 10h4c0 3 0 5-3 6l-.5-1c1-.5 1.200-1 1.200-2H11z" fill="currentColor" /></>;
const mic = <><rect x="6" y="1" width="6" height="10" rx="3" fill="currentColor" /><path d="M3.500 8a5.500 5.500 0 0011 0M9 13.500V17" fill="none" stroke="currentColor" strokeWidth="1.700" /></>;
const zhong = <path d="M2 5.500h14v6H2zM9 1v16" fill="none" stroke="currentColor" strokeWidth="2" />;

function ImeIcon({ art }: { art: ReactNode }) {
  return <svg viewBox="0 0 18 18" className="h-[18px] w-[18px] shrink-0" aria-hidden="true">{art}</svg>;
}

function Overlays() {
  return (
    <>
      <div className="pointer-events-none fixed right-[90px] bottom-[50px] w-[200px] text-[#b9b9b9]">
        <div className="text-xl leading-[26px]">激活 Windows</div>
        <div className="text-[15px] leading-5 whitespace-nowrap">转到“设置”以激活 Windows。</div>
      </div>

      <div className="fixed right-1 bottom-[276px] flex h-[26px] w-[141px] items-center gap-1.5 rounded-sm border border-[#b3cdea] bg-white pl-[23px] text-[#0a6cd6]">
        <ImeIcon art={zhong} />
        <ImeIcon art={punct} />
        <ImeIcon art={mic} />
        <ImeIcon art={<><rect x="1" y="3" width="16" height="12" rx="1" fill="currentColor" /><path d="M3 6h12M3 9h12" stroke="#fff" strokeWidth="1.800" strokeDasharray="2 1.200" /><path d="M5 12.500h8" stroke="#fff" strokeWidth="1.500" /></>} />
        <ImeIcon art={<><rect x="2" y="2" width="6" height="6" rx="1.500" fill="#a77bea" /><rect x="10.500" y="2.500" width="5" height="5" rx="1.500" fill="none" stroke="#e5746e" strokeWidth="1.700" /><rect x="2" y="10" width="6" height="6" rx="1.500" fill="#c77fd8" /><rect x="10" y="10" width="6" height="6" rx="1.500" fill="#f98f68" /></>} />
        <svg viewBox="0 0 32 32" className="absolute -top-1.5 -left-3.5 h-8 w-8" aria-hidden="true">
          <path d="M3 5L25 1c3 0 3 1 4 3l3 20c0 3-1 4-3 4L9 31c-2 0-3-1-4-3L1 9c0-2 0-3 2-4z" fill="#f8521c" />
          <path d="M25 8C15 5 7 7 7 12s18 2 18 8-11 6-18 2" fill="none" stroke="#fff" strokeWidth="5" />
        </svg>
      </div>

      <div className="fixed right-0 bottom-[127px] flex h-[59px] w-2.5 flex-col justify-center rounded-l-md border border-r-0 border-[#2c313d] bg-[#454c5e] pl-[3px]">
        <div className="h-3 bg-[repeating-linear-gradient(#20242e_0_2px,#454c5e_2px_3px)]" />
        <div className="h-9 bg-[repeating-linear-gradient(transparent_0_2px,#454c5e_2px_3px),linear-gradient(#f2c86a,#c8e07a,#5fd0c0)]" />
      </div>

      <div className="fixed right-0 bottom-0 flex h-[29px] w-[171px] items-center gap-[9px] border border-[#c8c8c8] bg-white pl-1 text-[#3f62e8]">
        <svg viewBox="0 0 22 22" className="h-[22px] w-[22px] shrink-0" aria-hidden="true">
          <circle cx="11" cy="11" r="10" fill="none" stroke="currentColor" strokeWidth="1.800" />
          <text x="4" y="14" fontSize="7" fontWeight="700" fontFamily="Liberation Sans, sans-serif" fill="currentColor">iFLY</text>
        </svg>
        <ImeIcon art={zhong} />
        <ImeIcon art={punct} />
        <ImeIcon art={mic} />
        <ImeIcon art={<><circle cx="9" cy="5.500" r="4" fill="currentColor" /><path d="M2 16c0-7 14-7 14 0z" fill="currentColor" /></>} />
        <ImeIcon art={<path d="M2 2h6v6H2zM2 10h6v6H2zM10 10h6v6h-6zM13 .5L17 5l-4 4-4-4z" fill="currentColor" />} />
      </div>

      <div className="pointer-events-none fixed right-2 bottom-[7px] flex items-end opacity-80">
        <svg viewBox="0 0 46 44" className="h-11 w-[46px]" aria-hidden="true">
          <path d="M42 3C20 3 2 12 3 30c0 3 2 5 5 7C4 22 18 9 42 3z" fill="#3b9bd8" />
          <path d="M24 16c10-3 18 0 18 6 0 8-12 17-32 17 14-3 24-9 24-16 0-4-4-6-10-7z" fill="#5bbf6a" />
          <path d="M14 30c0-7 12-10 14-5s-8 9-12 6" fill="none" stroke="#3b86c8" strokeWidth="3" />
          <path d="M8 38c8 0 20-3 24-12 3 10-12 17-24 12z" fill="#b8d86a" />
        </svg>
        <div className="w-[109px] font-bold whitespace-nowrap">
          <div className="text-[21px] leading-6 text-[#4a8fd0]">极光下载站</div>
          <div className="text-base leading-5 text-[#4fba68]">www.xz7.com</div>
        </div>
      </div>
    </>
  );
}

export default function App() {
  return (
    <div className="flex h-screen min-h-[700px] flex-col overflow-hidden bg-[#222] font-['Noto_Sans','Noto_Sans_CJK_SC',sans-serif]">
      <TitleBar />
      <div className="flex min-h-0 flex-1 flex-col border-x-2 border-b-2 border-[#1c1c1c]">
        <RibbonTabs />
        <Ribbon />
        <DocTabs />
        <main className="flex min-h-0 flex-1 bg-[#f0f0f0]">
          <Favourites />
          <PropertyPanel />
          <div className="flex min-w-0 flex-1 flex-col">
            <Drawing />
            <SheetTabs />
          </div>
          <div className="flex w-[17px] flex-col bg-linear-to-b from-[#eef6ff] to-[#c9daf0]">
            <div className="flex flex-1 flex-col items-center border-l border-white bg-[#f0f0f0]">
              <Chevron dir="up" />
              <span className="flex-7" />
              <div className="h-[17px] w-[15px] bg-[#cdcdcd]" />
              <span className="flex-5" />
              <Chevron dir="down" />
            </div>
            <div className="h-[21px]" />
          </div>
        </main>
        <CommandArea />
        <StatusBar />
      </div>
      <Overlays />
    </div>
  );
}
